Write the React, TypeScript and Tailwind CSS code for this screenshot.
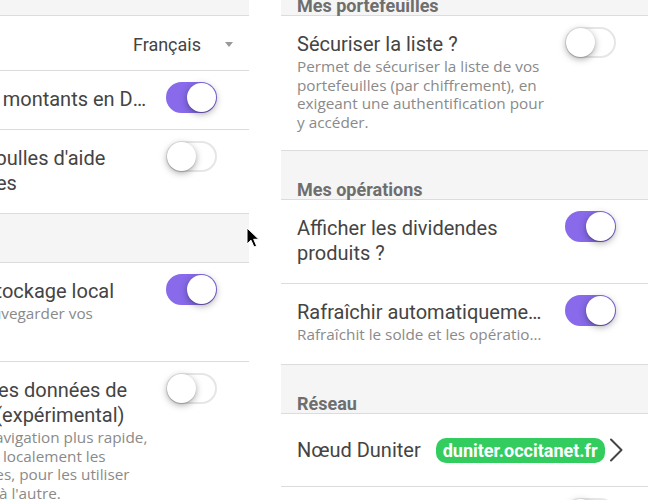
import React from "react";

function Toggle({ on }: { on: boolean }) {
  return (
    <div className="absolute top-[11px] right-[32px] w-[51px] h-[31px]">
      <div
        className={
          on
            ? "absolute inset-0 rounded-full border-2 border-[#886aea] bg-[#886aea]"
            : "absolute inset-0 rounded-full border-2 border-[#e6e6e6] bg-white"
        }
      />
      <div
        className={
          on
            ? "absolute top-[1px] left-[21px] w-[29px] h-[29px] rounded-full bg-white shadow-[0_2px_7px_rgba(0,0,0,0.35),0_1px_1px_rgba(0,0,0,0.15)]"
            : "absolute top-[1px] left-[1px] w-[29px] h-[29px] rounded-full bg-white shadow-[0_2px_7px_rgba(0,0,0,0.35),0_1px_1px_rgba(0,0,0,0.15)]"
        }
      />
    </div>
  );
}

function Divider({ label }: { label: string }) {
  return (
    <div className="h-[49px] shrink-0 bg-[#f5f5f5] border-b border-[#dcdcdc] flex items-end pl-4">
      <span className="text-[18px] leading-none font-bold text-[#6e6e6e] whitespace-nowrap">
        {label}
      </span>
    </div>
  );
}

function ToggleRow({
  title,
  desc,
  on,
  truncate,
  pb,
}: {
  title: string;
  desc?: string;
  on: boolean;
  truncate?: boolean;
  pb: string;
}) {
  return (
    <div className={`relative shrink-0 border-b border-[#dcdcdc] pl-4 pr-[99px] pt-4 ${pb}`}>
      <div
        className={
          truncate
            ? "text-[20px] leading-[25px] text-[#444] whitespace-nowrap overflow-hidden text-ellipsis"
            : "text-[20px] leading-[25px] text-[#444]"
        }
      >
        {title}
      </div>
      {desc && (
        <div
          className={
            truncate
              ? "font-['Open_Sans',sans-serif] text-[15.3px] leading-[18.5px] text-[#8a8a8a] whitespace-nowrap overflow-hidden text-ellipsis"
              : "font-['Open_Sans',sans-serif] text-[15.3px] leading-[18.5px] text-[#8a8a8a]"
          }
        >
          {desc}
        </div>
      )}
      <Toggle on={on} />
    </div>
  );
}

function LeftPanel() {
  return (
    <div className="w-[367px] shrink-0 flex flex-col">
      <Divider label="Affichage" />
      <div className="relative h-[55px] shrink-0 border-b border-[#dcdcdc] flex items-start justify-between pl-4 pr-4 pt-4">
        <span className="text-[20px] leading-[25px] text-[#444]">Langue</span>
        <div className="flex items-center h-[25px]">
          <span className="text-[18px] leading-[25px] text-[#444]">Français</span>
          <span className="ml-[24px] w-0 h-0 border-x-[4px] border-x-transparent border-t-[5px] border-t-[#999]" />
        </div>
      </div>
      <ToggleRow title="Afficher les montants en DU ?" on={true} truncate pb="pb-[17px]" />
      <ToggleRow title="Activer les bulles d'aide contextuelles" on={false} pb="pb-[17px]" />
      <Divider label="Stockage" />
      <ToggleRow
        title="Activer le stockage local"
        desc="Permet de sauvegarder vos paramètres"
        on={true}
        pb="pb-[20px]"
      />
      <ToggleRow
        title="Conserver les données de navigation (expérimental)"
        desc="Permet une navigation plus rapide, en conservant localement les données reçues, pour les utiliser d'une session à l'autre."
        on={false}
        pb="pb-[20px]"
      />
    </div>
  );
}

function RightPanel() {
  return (
    <div className="w-[367px] shrink-0 flex flex-col">
      <Divider label="Mes portefeuilles" />
      <ToggleRow
        title="Sécuriser la liste ?"
        desc="Permet de sécuriser la liste de vos portefeuilles (par chiffrement), en exigeant une authentification pour y accéder."
        on={false}
        pb="pb-[19px]"
      />
      <Divider label="Mes opérations" />
      <ToggleRow title="Afficher les dividendes produits ?" on={true} pb="pb-[17px]" />
      <ToggleRow
        title="Rafraîchir automatiquement ?"
        desc="Rafraîchit le solde et les opérations automatiquement"
        on={true}
        truncate
        pb="pb-[20.5px]"
      />
      <Divider label="Réseau" />
      <div className="relative h-[73px] shrink-0 border-b border-[#dcdcdc] flex items-center pl-4">
        <span className="text-[20px] leading-[25px] text-[#444]">Nœud Duniter</span>
        <span className="ml-[15px] h-[25px] px-[7px] rounded-[10px] bg-[#33cd5f] text-white text-[18px] leading-[25px] font-bold">
          duniter.occitanet.fr
        </span>
        <svg className="ml-[3px]" width="16" height="24" viewBox="0 0 16 24" fill="none">
          <path d="M3 1.5 L13.5 12 L3 22.5" stroke="#444" strokeWidth="2" strokeLinecap="round" strokeLinejoin="round" />
        </svg>
      </div>
      <ToggleRow title="Afficher les nœuds" on={false} pb="pb-[17px]" />
    </div>
  );
}

export default function App() {
  return (
    <div className="relative w-[650px] h-[500px] overflow-hidden bg-white font-['Roboto',sans-serif]">
      <div className="flex gap-[32px] ml-[-118px] mt-[-33px]">
        <LeftPanel />
        <RightPanel />
      </div>
      <svg
        className="absolute left-[246px] top-[227px]"
        width="14"
        height="22"
        viewBox="0 0 14 22"
      >
        <path
          d="M1 1 L1 17 L5 13.2 L8 20 L10.6 18.9 L7.7 12.3 L12.8 12.3 Z"
          fill="#000"
          stroke="#fff"
          strokeWidth="1"
          strokeLinejoin="round"
        />
      </svg>
    </div>
  );
}
